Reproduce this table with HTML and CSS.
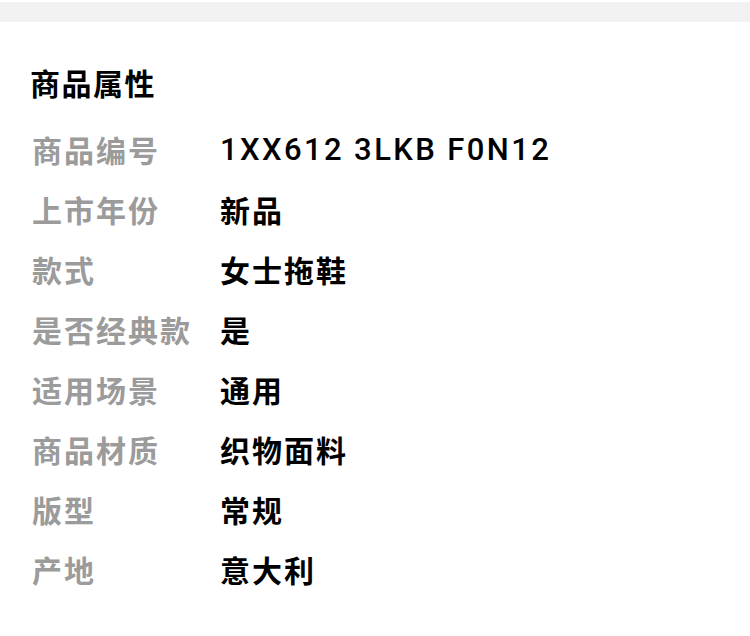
FILE: index.html
```html
<!DOCTYPE html>
<html lang="zh-CN">
<head>
<meta charset="utf-8">
<link rel="stylesheet" href="styles.css">
</head>
<body>
<div class="topbar"></div>
<section class="attrs">
  <h2 class="title">商品属性</h2>
  <div class="list">
    <div class="row"><span class="label">商品编号</span><span class="value code">1XX612 3LKB F0N12</span></div>
    <div class="row"><span class="label">上市年份</span><span class="value">新品</span></div>
    <div class="row"><span class="label">款式</span><span class="value">女士拖鞋</span></div>
    <div class="row"><span class="label">是否经典款</span><span class="value">是</span></div>
    <div class="row"><span class="label">适用场景</span><span class="value">通用</span></div>
    <div class="row"><span class="label">商品材质</span><span class="value">织物面料</span></div>
    <div class="row"><span class="label">版型</span><span class="value">常规</span></div>
    <div class="row"><span class="label">产地</span><span class="value">意大利</span></div>
  </div>
</section>
</body>
</html>
```

FILE: styles.css
```css
* { box-sizing: border-box; }
html, body {
  margin: 0;
  padding: 0;
  background: #ffffff;
  font-family: "Noto Sans CJK SC", "Noto Sans", sans-serif;
}
.topbar {
  height: 20px;
  margin-top: 2px;
  background: #f2f2f2;
}
.attrs {
  padding: 40px 30px 0 30px;
}
.title {
  margin: 0;
  height: 40px;
  line-height: 40px;
  font-size: 30px;
  font-weight: 700;
  color: #000;
  letter-spacing: 1.5px;
}
.list {
  margin-top: 17px;
  display: flex;
  flex-direction: column;
}
.row {
  height: 60px;
  display: flex;
  align-items: center;
}
.label {
  width: 190px;
  flex: none;
  padding-left: 2px;
  font-size: 30px;
  font-weight: 700;
  color: #9b9b9b;
  letter-spacing: 2px;
}
.value {
  font-size: 30px;
  font-weight: 700;
  color: #000;
  letter-spacing: 2px;
}
.value.code {
  font-family: "Roboto", sans-serif;
  font-weight: 500;
  font-size: 31px;
  letter-spacing: 2.4px;
}
```
